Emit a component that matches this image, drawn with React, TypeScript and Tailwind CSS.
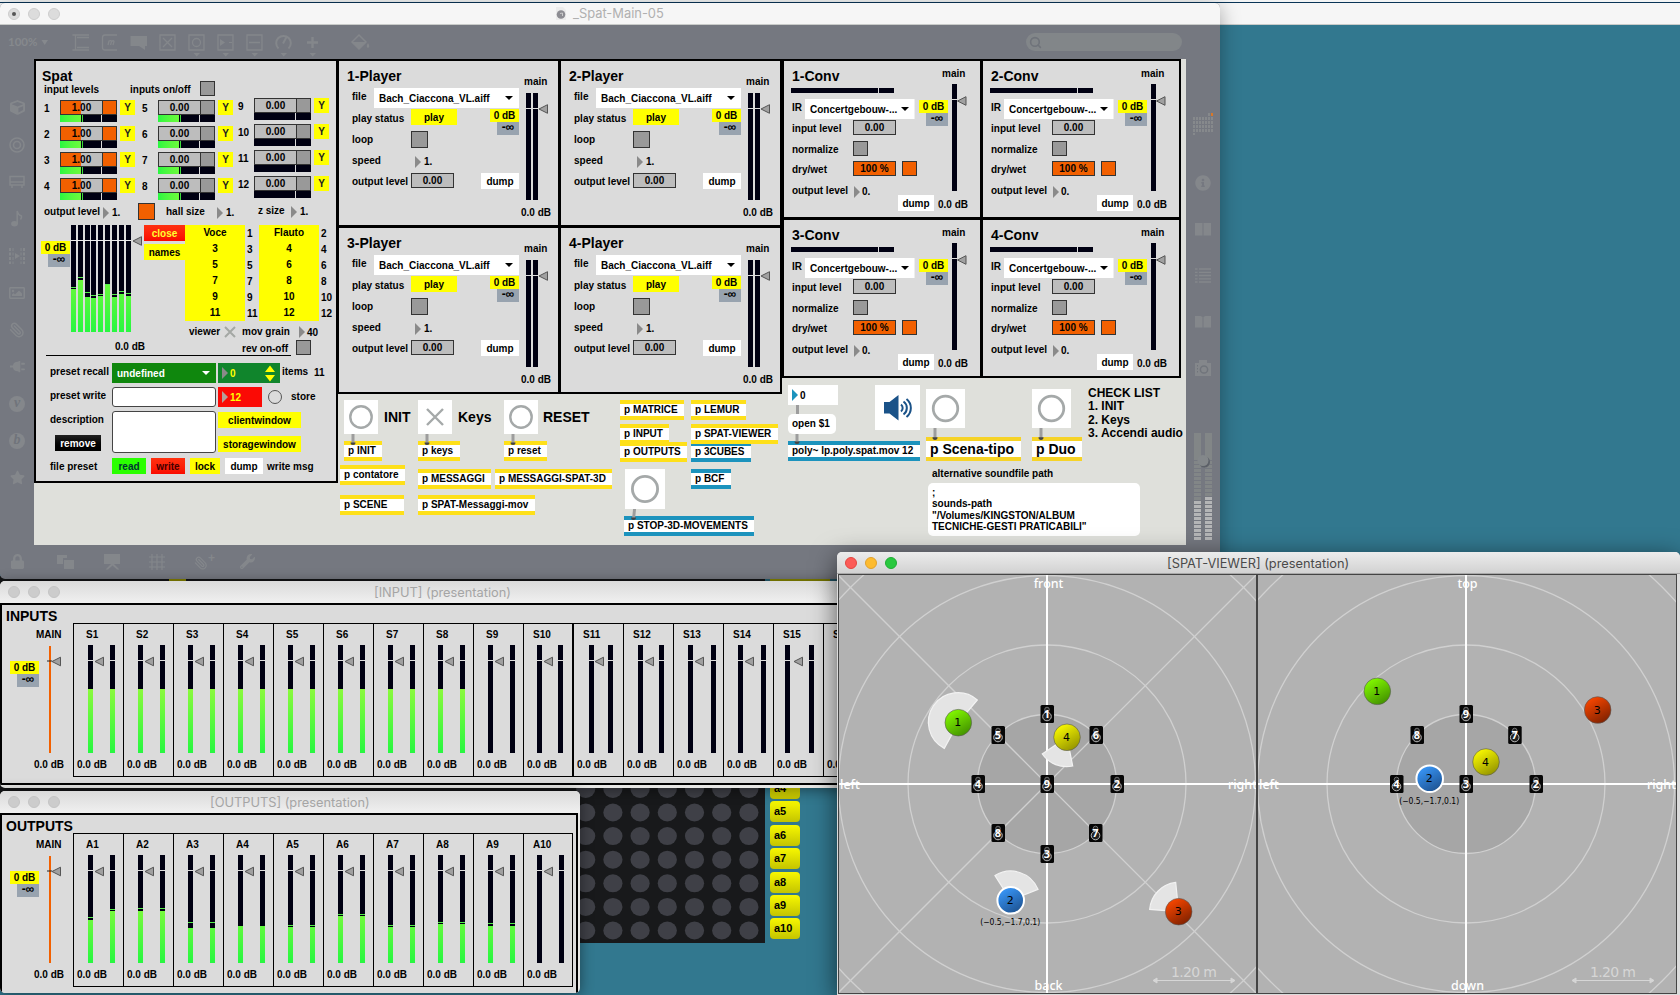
import React from "react";
import { FaCube, FaMusic, FaPlug, FaStar, FaLock, FaWrench, FaInfoCircle, FaRegImage } from "react-icons/fa";
import { Paperclip, Search } from "lucide-react";

type P = { c?: string; children?: React.ReactNode };

const L = ({ c = "", children }: P) => <span className={`block shrink-0 whitespace-nowrap ${c}`}>{children}</span>;

const Btn = ({ c = "", children }: P) => (
  <span className={`block h-4 shrink-0 text-center leading-[17px] whitespace-nowrap ${c}`}>{children}</span>
);

const Box = ({ c = "", children }: P) => (
  <span className={`block h-[15px] shrink-0 border border-[#333] text-center leading-[13px] whitespace-nowrap ${c}`}>{children}</span>
);

const Tri = ({ c = "", fill = "#8a8a8a" }: { c?: string; fill?: string }) => (
  <svg className={`block shrink-0 ${c}`} width="6" height="12" viewBox="0 0 6 12">
    <path d="M0 0L6 6L0 12Z" fill={fill} />
  </svg>
);

const Down = ({ c = "", fill = "#000" }: { c?: string; fill?: string }) => (
  <svg className={`block shrink-0 ${c}`} width="8" height="4" viewBox="0 0 8 4">
    <path d="M0 0H8L4 4Z" fill={fill} />
  </svg>
);

const Gain = ({ c = "" }: P) => (
  <div className={`flex w-[29px] shrink-0 flex-col items-end ${c}`}>
    <span className="h-[13px] w-[29px] bg-[#ffff00] text-center leading-[13px]">0 dB</span>
    <span className="h-[13px] w-[22px] bg-[#98a3af] text-center text-[12px] leading-[11px]">-∞</span>
  </div>
);

const Knob = ({ x, y }: { x: number; y: number }) => (
  <path d={`M${x} ${y}L${x + 8.5} ${y - 4.3}V${y + 4.3}Z`} fill="#a0a0a0" stroke="#555" strokeWidth="1" />
);

const DARK = "#000012";

function PlayerMeter() {
  return (
    <svg className="mt-[6px] ml-[5px] block" width="23" height="107">
      <rect width="5" height="107" fill={DARK} />
      <rect x="7" width="5" height="107" fill={DARK} />
      <rect y="15" width="12" height="1" fill="#ddd" />
      <Knob x={13} y={16} />
    </svg>
  );
}

function Player({ n }: { n: number }) {
  return (
    <section className="flex h-[168px] w-[223px] border-2 border-black bg-[#dbdbdb]">
      <div className="flex w-[182px] shrink-0 flex-col pt-[7px] pl-2">
        <h2 className="h-4 text-[14px] leading-4">{n}-Player</h2>
        <div className="mt-1 ml-[5px] flex h-[21px] items-start">
          <L c="w-[22px] leading-[17px]">file</L>
          <div className="flex h-5 w-[145px] shrink-0 items-center justify-between bg-white pr-[6px] pl-[5px]">
            <L>Bach_Ciaccona_VL.aiff</L>
            <Down />
          </div>
        </div>
        <div className="ml-[5px] flex h-[22px] items-start">
          <L c="w-[59px] leading-[19px]">play status</L>
          <Btn c="w-[46px] bg-[#ffff00]">play</Btn>
          <Gain c="ml-[33px]" />
        </div>
        <div className="ml-[5px] flex h-[22px] items-start">
          <L c="w-[59px] leading-[17px]">loop</L>
          <span className="h-[17px] w-[17px] border border-[#333] bg-[#999]" />
        </div>
        <div className="ml-[5px] flex h-5 items-start">
          <L c="w-[63px] leading-[15px]">speed</L>
          <Tri c="mt-[3px]" />
          <L c="ml-[3px] leading-[17px]">1.</L>
        </div>
        <div className="ml-[5px] flex items-start">
          <L c="w-[59px] leading-[17px]">output level</L>
          <Box c="w-[43px] bg-[#bdbdbd]">0.00</Box>
          <Btn c="ml-[27px] w-[38px] bg-white">dump</Btn>
        </div>
      </div>
      <div className="flex flex-col pt-[16px]">
        <L c="ml-[3px] leading-[10px]">main</L>
        <PlayerMeter />
        <L c="mt-[6px] leading-[13px]">0.0 dB</L>
      </div>
    </section>
  );
}

function Conv({ n }: { n: number }) {
  return (
    <section className="flex h-[160px] w-[200px] border-2 border-black bg-[#dbdbdb]">
      <div className="flex w-[154px] shrink-0 flex-col pt-[7px] pl-2">
        <h2 className="h-4 text-[14px] leading-4">{n}-Conv</h2>
        <div className="mt-1 -ml-px flex h-[5px] gap-px">
          <span className="w-[87px] bg-[#000012]" />
          <span className="w-[15px] bg-[#000012]" />
        </div>
        <div className="mt-[6px] flex h-[21px] items-start">
          <L c="w-[13px] leading-[17px]">IR</L>
          <div className="flex h-5 w-[110px] shrink-0 items-center justify-between border-r border-[#eee] bg-white pr-[5px] pl-[5px]">
            <L>Concertgebouw-...</L>
            <Down />
          </div>
          <Gain c="mt-px ml-1" />
        </div>
        <div className="flex h-[21px] items-start">
          <L c="w-[61px] leading-[18px]">input level</L>
          <Box c="w-[43px] bg-[#bdbdbd]">0.00</Box>
        </div>
        <div className="flex h-5 items-start">
          <L c="w-[61px] leading-[18px]">normalize</L>
          <Box c="w-[15px] bg-[#999]" />
        </div>
        <div className="flex h-[21px] items-start">
          <L c="w-[61px] leading-[18px]">dry/wet</L>
          <Box c="w-[43px] bg-[#f26000]">100 %</Box>
          <Box c="ml-[6px] w-[15px] bg-[#f26000]" />
        </div>
        <div className="flex items-start">
          <L c="w-[62px] leading-[18px]">output level</L>
          <Tri c="mt-1" />
          <L c="ml-[2px] w-9 leading-[19px]">0.</L>
          <Btn c="mt-[13px] w-9 bg-white">dump</Btn>
        </div>
      </div>
      <div className="flex flex-col pt-[7px]">
        <L c="ml-1 leading-[12px]">main</L>
        <svg className="mt-[4px] ml-[14px] block" width="16" height="107">
          <rect width="5" height="107" fill={DARK} />
          <rect y="15" width="6" height="1" fill="#ddd" />
          <Knob x={5.5} y={17} />
        </svg>
        <L c="mt-[8px] leading-[12px]">0.0 dB</L>
      </div>
    </section>
  );
}

function Channels({ nums, kind, c }: { nums: number[]; kind: "on" | "half" | "off"; c: string }) {
  return (
    <div className={`flex flex-col gap-1 ${c}`}>
      {nums.map((n) => (
        <div key={n} className="flex h-[22px] items-start">
          <L c="w-4 leading-[17px]">{n}</L>
          <div className="w-[57px] shrink-0">
            <div className="flex">
              <Box c={`w-[43px] ${kind === "on" ? "bg-linear-to-r from-[#f26000] from-50% to-[#bdbdbd] to-50%" : "bg-[#bdbdbd]"}`}>
                {kind === "on" ? "1.00" : "0.00"}
              </Box>
              <Box c={`-ml-px w-[15px] ${kind === "on" ? "bg-[#f26000]" : "bg-[#999]"}`} />
            </div>
            <div className="flex h-[7px] gap-px">
              <span className="flex w-[41px] bg-[#000012]">
                {kind !== "off" && (
                  <>
                    <span className="mr-px w-[21px] bg-linear-to-r from-[#27f741] to-[#6cfa3c]" />
                    <span className="w-px bg-[#3fdd3c]" />
                  </>
                )}
              </span>
              <span className="w-[15px] bg-[#000012]" />
            </div>
          </div>
          <span className="ml-[3px] h-[15px] w-[15px] bg-[#ffff00] text-center leading-[15px] text-[#222]">Y</span>
        </div>
      ))}
    </div>
  );
}

const spatBars = [
  [0, 64, 62], [7, 55, 52], [14, 72, 67], [20, 73, 70], [27, 71, 69], [34, 59, 59], [41, 72, 69], [48, 69, 66], [55, 71, 68],
];

function List({ items, c }: { items: string[]; c: string }) {
  return (
    <div className={`h-24 shrink-0 ${c}`}>
      {items.map((t) => (
        <span key={t} className="block h-4 leading-[15px]">{t}</span>
      ))}
    </div>
  );
}

function Spat() {
  return (
    <section className="h-[424px] w-[304px] shrink-0 border-2 border-black bg-[#dbdbdb]">
      <div className="flex h-[39px] flex-col pt-[7px] pl-[6px]">
        <h2 className="h-[13px] text-[14px] leading-4">Spat</h2>
        <div className="ml-[2px] flex items-start">
          <L c="w-[86px] leading-[17px]">input levels</L>
          <L c="w-[70px] leading-[17px]">inputs on/off</L>
          <Box c="w-[15px] bg-[#999]" />
        </div>
      </div>
      <div className="flex h-[103px] items-start pl-2">
        <Channels nums={[1, 2, 3, 4]} kind="on" c="w-[98px]" />
        <Channels nums={[5, 6, 7, 8]} kind="half" c="w-24" />
        <Channels nums={[9, 10, 11, 12]} kind="off" c="-mt-[2px]" />
      </div>
      <div className="flex h-[22px] items-start pl-2">
        <L c="w-[59px] leading-[17px]">output level</L>
        <Tri c="mt-1" />
        <L c="ml-[3px] w-[26px] leading-[19px]">1.</L>
        <span className="h-[17px] w-[17px] border border-[#333] bg-[#f26000]" />
        <L c="ml-[11px] w-[51px] leading-[17px]">hall size</L>
        <Tri c="mt-1" />
        <L c="ml-[3px] w-8 leading-[19px]">1.</L>
        <L c="w-[33px] leading-[15px]">z size</L>
        <Tri c="mt-[3px]" />
        <L c="ml-[3px] leading-[17px]">1.</L>
      </div>
      <div className="flex h-[130px]">
        <div className="flex w-[108px] shrink-0 flex-col">
          <div className="flex h-[107px]">
            <Gain c="mt-4 ml-[5px]" />
            <svg className="ml-px block" width="72" height="107">
              <defs>
                <linearGradient id="spatg" x1="0" y1="0" x2="0" y2="107" gradientUnits="userSpaceOnUse">
                  <stop offset="0.4" stopColor="#7dfa3a" />
                  <stop offset="1" stopColor="#27f741" />
                </linearGradient>
              </defs>
              {spatBars.map(([x, t, p]) => (
                <g key={x}>
                  <rect x={x} width="5" height="107" fill={DARK} />
                  <rect x={x} y={t} width="5" height={107 - t} fill="url(#spatg)" />
                  <rect x={x} y={p} width="5" height="1" fill="#55ee4a" />
                </g>
              ))}
              <rect y="15" width="60" height="1" fill="#eee" />
              <Knob x={62} y={16} />
            </svg>
          </div>
          <L c="mt-2 ml-[79px] leading-[13px]">0.0 dB</L>
        </div>
        <div className="flex flex-col">
          <div className="flex h-24">
            <div className="flex w-[41px] shrink-0 flex-col gap-[3px]">
              <Btn c="bg-linear-to-b from-[#ff3010] to-[#fa0800] text-[#ffff30]">close</Btn>
              <Btn c="bg-[#ffff00]">names</Btn>
            </div>
            <List c="w-[60px] bg-[#ffff00] text-center" items={["Voce", "3", "5", "7", "9", "11"]} />
            <List c="ml-[2px] w-[12px] pt-px" items={["1", "3", "5", "7", "9", "11"]} />
            <List c="w-[60px] bg-[#ffff00] text-center" items={["Flauto", "4", "6", "8", "10", "12"]} />
            <List c="ml-[2px] w-[12px] pt-px" items={["2", "4", "6", "8", "10", "12"]} />
          </div>
          <div className="mt-[2px] ml-[45px] flex h-[17px] items-start">
            <L c="w-[35px] leading-[17px]">viewer</L>
            <svg className="mt-[3px] block shrink-0" width="12" height="12">
              <path d="M1 1L11 11M11 1L1 11" stroke="#a4a8a4" strokeWidth="2" />
            </svg>
            <L c="ml-[6px] w-[57px] leading-[17px]">mov grain</L>
            <Tri c="mt-[3px]" />
            <L c="ml-[2px] leading-[19px]">40</L>
          </div>
          <div className="ml-[98px] flex items-start">
            <L c="w-[54px] leading-[17px]">rev on-off</L>
            <Box c="w-[15px] bg-[#999]" />
          </div>
        </div>
      </div>
      <div className="ml-[10px] h-px w-[245px] bg-black" />
      <div className="mt-[7px] flex h-6 items-start pl-[14px]">
        <L c="w-[62px] leading-[18px]">preset recall</L>
        <div className="flex h-5 w-[104px] shrink-0 items-center justify-between bg-[#0f870d] pr-[6px] pl-[5px] text-white">
          <L>undefined</L>
          <Down fill="#fff" />
        </div>
        <div className="ml-[2px] flex h-5 w-[62px] shrink-0 items-center bg-[#10852c] pr-[5px] pl-1 text-[#ffff00]">
          <Tri />
          <L c="ml-[2px] flex-1">0</L>
          <svg className="block" width="10" height="17">
            <path d="M0 7L5 0.5L10 7ZM0 10L5 16.5L10 10Z" fill="#ffff00" />
          </svg>
        </div>
        <L c="ml-[2px] w-8 leading-[18px]">items</L>
        <L c="leading-[19px]">11</L>
      </div>
      <div className="flex h-6 items-start pl-[14px]">
        <L c="w-[62px] leading-[18px]">preset write</L>
        <span className="h-5 w-[104px] shrink-0 rounded-[3px] border-[1.5px] border-[#444] bg-white" />
        <div className="ml-[2px] flex h-5 w-11 shrink-0 items-center bg-[#fb0a05] pl-1 text-[#ffff00]">
          <Tri fill="#b5a09a" />
          <L c="ml-[2px]">12</L>
        </div>
        <span className="mt-[3px] ml-[6px] h-[14px] w-[14px] shrink-0 rounded-full border-[1.5px] border-[#555]" />
        <L c="ml-[9px] leading-[20px]">store</L>
      </div>
      <div className="flex h-[47px] items-start pl-[14px]">
        <div className="w-[62px] shrink-0">
          <L c="leading-[17px]">description</L>
          <Btn c="mt-[7px] ml-[5px] w-[46px] bg-linear-to-b from-[#222] to-black text-white">remove</Btn>
        </div>
        <span className="h-[42px] w-[104px] shrink-0 rounded-[3px] border-[1.5px] border-[#444] bg-white" />
        <div className="mt-px ml-[2px] flex w-[83px] flex-col gap-2">
          <Btn c="bg-[#ffff00]">clientwindow</Btn>
          <Btn c="bg-[#ffff00]">storagewindow</Btn>
        </div>
      </div>
      <div className="flex items-start pl-[14px]">
        <L c="w-[62px] leading-[17px]">file preset</L>
        <Btn c="w-[34px] bg-[#2aff00] text-[#033]">read</Btn>
        <Btn c="ml-[5px] w-[34px] bg-linear-to-b from-[#ff3010] to-[#fa0800] text-[#400]">write</Btn>
        <Btn c="ml-[5px] w-[30px] bg-[#ffff00]">lock</Btn>
        <Btn c="ml-[5px] w-[38px] bg-white">dump</Btn>
        <L c="ml-1 leading-[17px]">write msg</L>
      </div>
    </section>
  );
}

const objects: [string, string][] = [
  ["p 3CUBES", "left-[657px] top-[383px] w-[60px] border-[#1c93bd]"],
  ["p MATRICE", "left-[586px] top-[341px] w-[64px] border-[#fee019]"],
  ["p LEMUR", "left-[657px] top-[341px] w-[55px] border-[#fee019]"],
  ["p INPUT", "left-[586px] top-[365px] w-[49px] border-[#fee019]"],
  ["p SPAT-VIEWER", "left-[657px] top-[365px] w-[87px] border-[#fee019]"],
  ["p OUTPUTS", "left-[586px] top-[383px] w-[67px] border-[#fee019]"],
  ["p BCF", "left-[657px] top-[410px] w-[40px] border-[#1c93bd]"],
  ["p INIT", "left-[310px] top-[382px] w-[38px] border-[#fee019]"],
  ["p keys", "left-[384px] top-[382px] w-[42px] border-[#fee019]"],
  ["p reset", "left-[470px] top-[382px] w-[43px] border-[#fee019]"],
  ["p contatore", "left-[306px] top-[406px] w-[65px] border-[#fee019]"],
  ["p SCENE", "left-[306px] top-[436px] w-[64px] border-[#fee019]"],
  ["p MESSAGGI", "left-[384px] top-[410px] w-[73px] border-[#fee019]"],
  ["p MESSAGGI-SPAT-3D", "left-[461px] top-[410px] w-[117px] border-[#fee019]"],
  ["p SPAT-Messaggi-mov", "left-[384px] top-[436px] w-[117px] border-[#fee019]"],
  ["p STOP-3D-MOVEMENTS", "left-[590px] top-[457px] w-[130px] border-[#1c93bd]"],
  ["poly~ lp.poly.spat.mov 12", "left-[754px] top-[382px] w-[132px] border-[#1c93bd]"],
];

const Bang = ({ c }: { c: string }) => (
  <div className={`absolute bg-white ${c}`}>
    <svg className="block h-full w-full" viewBox="0 0 34 34">
      <circle cx="17" cy="17" r="10.7" fill="none" stroke="#a5a9a9" strokeWidth="2.4" />
    </svg>
  </div>
);

const Cord = ({ c }: { c: string }) => (
  <svg className={`absolute ${c}`} width="6" height="11" viewBox="0 0 6 11" preserveAspectRatio="none">
    <rect x="1.5" width="3" height="10" fill="#9d9d9d" />
    <path d="M0.5 8.5H5.5A2.5 2.5 0 0 1 0.5 8.5Z" fill="#444" />
  </svg>
);

function Patch() {
  return (
    <>
      {objects.map(([t, c]) => (
        <div key={t} className={`absolute h-5 border-y-4 bg-white pl-1 leading-[12px] whitespace-nowrap ${c}`}>{t}</div>
      ))}
      <div className="absolute top-[378px] left-[892px] h-6 w-[95px] border-y-4 border-[#f6d327] bg-white pl-1 text-[14px] leading-[16px] whitespace-nowrap">p Scena-tipo</div>
      <div className="absolute top-[378px] left-[998px] h-6 w-[50px] border-y-4 border-[#f6d327] bg-white pl-1 text-[14px] leading-[16px] whitespace-nowrap">p Duo</div>
      <Bang c="left-[310px] top-[341px] h-[34px] w-[34px]" />
      <div className="absolute top-[341px] left-[384px] h-[34px] w-[34px] bg-white">
        <svg className="block" width="34" height="34">
          <path d="M9 9L25 25M25 9L9 25" stroke="#a5a9a9" strokeWidth="2.4" />
        </svg>
      </div>
      <Bang c="left-[470px] top-[341px] h-[34px] w-[34px]" />
      <Bang c="left-[591px] top-[410px] h-[40px] w-[40px]" />
      <Bang c="left-[892px] top-[330px] h-[39px] w-[39px]" />
      <Bang c="left-[998px] top-[330px] h-[39px] w-[39px]" />
      <h3 className="absolute top-[350px] left-[350px] text-[14px] leading-4">INIT</h3>
      <h3 className="absolute top-[350px] left-[424px] text-[14px] leading-4">Keys</h3>
      <h3 className="absolute top-[350px] left-[509px] text-[14px] leading-4">RESET</h3>
      <Cord c="left-[316px] top-[375px]" />
      <Cord c="left-[390px] top-[375px]" />
      <Cord c="left-[476px] top-[375px]" />
      <Cord c="left-[597px] top-[450px] skew-x-[-6deg]" />
      <Cord c="left-[898px] top-[369px] h-[12px]" />
      <Cord c="left-[1004px] top-[369px] h-[12px]" />
      <Cord c="left-[760px] top-[374px] h-[11px]" />
      <div className="absolute top-[346px] left-[762px] h-[9px] w-[3px] bg-[#9d9d9d]" />
      <div className="absolute top-[326px] left-[754px] flex h-5 w-[50px] items-center gap-[2px] bg-white pl-1">
        <Tri fill="#1c93bd" />0
      </div>
      <div className="absolute top-[355px] left-[754px] h-5 w-12 rounded-[5px] bg-white pl-1 leading-5">open $1</div>
      <div className="absolute top-[326px] left-[841px] h-[45px] w-[45px] bg-white">
        <svg className="block" width="45" height="45" fill="none" stroke="#1a5288">
          <path d="M9 17H14.5L23.5 10V35.5L14.5 28.5H9Z" fill="#1a5288" stroke="none" />
          <path d="M26 19.500A4.500 4.500 0 0 1 26 26.500M28.500 16.500A8 8 0 0 1 28.500 29.500M31.500 14A11.500 11.500 0 0 1 31.500 32" strokeWidth="2" />
        </svg>
      </div>
      <div className="absolute top-[328px] left-[1054px] text-[12px] leading-[13.3px] whitespace-nowrap">
        <p>CHECK LIST</p>
        <p>1. INIT</p>
        <p>2. Keys</p>
        <p>3. Accendi audio</p>
      </div>
      <L c="absolute left-[898px] top-[407px] leading-[15px]">alternative soundfile path</L>
      <div className="absolute top-[424px] left-[894px] h-[53px] w-[212px] rounded-[5px] bg-white pt-[4px] pl-1 leading-[11.3px] whitespace-nowrap">
        <p>;</p>
        <p>sounds-path</p>
        <p>"/Volumes/KINGSTON/ALBUM</p>
        <p>TECNICHE-GESTI PRATICABILI"</p>
      </div>
    </>
  );
}

function Lights({ c, dot }: { c: string[]; dot?: boolean }) {
  return (
    <div className="flex w-[52px] shrink-0 gap-2">
      {c.map((k, i) => (
        <span key={i} className={`flex h-3 w-3 items-center justify-center rounded-full border ${k}`}>
          {dot && i === 0 && <span className="h-1 w-1 rounded-full bg-[#555]" />}
        </span>
      ))}
    </div>
  );
}

const Letter = ({ t }: { t: string }) => (
  <span className="flex h-4 w-4 items-center justify-center rounded-full bg-[#84878b] pb-[2px] font-['Liberation_Serif',serif] text-[14px] leading-none text-[#70747b] italic">{t}</span>
);

function Toolbar() {
  return (
    <div className="flex h-[34px] items-start text-[#86898d]">
      <span className="mt-[9px] ml-2 w-[32px] font-[Lato] text-[11.5px] leading-4">100%</span>
      <svg className="mt-[15px] ml-px" width="8" height="6"><path d="M0.500 0H7L3.700 5Z" fill="#86898d" /></svg>
      <svg className="mt-[8px] ml-[23px] block" width="300" height="26" fill="none" stroke="#84878b" strokeWidth="1.3">
        <path d="M0.500 2H17M0.500 17H17M3.500 2V17M5 4.500H17M5 14.500H17" />
        <path d="M45 2H33Q30.500 2 30.500 4.500V14.500Q30.500 17 33 17H45" />
        <path d="M36 12L37 8Q39 7 39.500 8.500L38.500 12M39.500 8.500Q41.500 7 42 8.500L41 12" />
        <path d="M58.500 3H75V13H73V17L67 13H58.500Z" fill="#84878b" stroke="none" />
        <path d="M88 2H103V17H88ZM91 5L100 14M100 5L91 14" />
        <path d="M117 2H132V17H117Z" /><circle cx="124.500" cy="9.500" r="4" />
        <path d="M146 2H161V17H146Z" /><path d="M148 6L153 9.500L148 13ZM157 9H160V10H157Z" fill="#84878b" stroke="none" />
        <path d="M175 2H190V17H175ZM177 9.500H188" />
        <path d="M206.500 15.500A7.300 7.300 0 1 1 216.500 15.500M211 10.500L214.500 4" strokeWidth="2" />
        <path d="M235 9.500H246M240.500 4V15" strokeWidth="2.400" />
        <path d="M280 9L287 2L294 9L287 16Z" strokeWidth="1.500" /><path d="M280 9H294L287 16ZM296 10Q298.500 14 296 15Q293.500 14 296 10Z" fill="#84878b" stroke="none" />
        <path d="M121.500 20H128L124.700 23.500ZM150.500 20H157L153.700 23.500ZM179.500 20H186L182.700 23.500ZM208.500 20H215L211.700 23.500ZM237.500 20H244L240.700 23.500Z" fill="#84878b" stroke="none" />
      </svg>
      <div className="mt-2 mr-[38px] ml-auto flex h-[18px] w-[156px] items-center rounded-full bg-[#828689] pl-[3px]">
        <Search size={13} color="#6f737a" strokeWidth={3} />
      </div>
    </div>
  );
}

function LeftBar() {
  const items: React.ReactNode[] = [
    <FaCube size={15} />,
    <svg width="16" height="16" fill="none" stroke="#84878b" strokeWidth="1.6"><circle cx="8" cy="8" r="7" /><circle cx="8" cy="8" r="3.500" /></svg>,
    <svg width="16" height="14" fill="none" stroke="#84878b" strokeWidth="1.5"><path d="M1 1.500H15V10H1ZM3 10V13M13 10V13M1 7H15" /></svg>,
    <svg width="12" height="17" viewBox="0 0 12 17"><ellipse cx="3.500" cy="13.800" rx="3.400" ry="2.700" fill="#84878b" /><path d="M6.200 14V1Q7 5 10.500 6Q10.800 8 9.500 9.500" fill="none" stroke="#84878b" strokeWidth="1.500" /></svg>,
    <svg width="16" height="16" fill="none" stroke="#84878b" strokeWidth="2"><path d="M1 0V16M15 0V16" strokeDasharray="3 1.500" /><path d="M4 0V16M12 0V16" strokeWidth="1" strokeDasharray="3 1.500" /><path d="M6 5L11 8L6 11Z" fill="#84878b" stroke="none" /></svg>,
    <FaRegImage size={16} />,
    <Paperclip size={16} strokeWidth={2.200} className="-scale-x-100" />,
    <FaPlug size={15} className="rotate-90" />,
    <Letter t="v" />,
    <Letter t="b" />,
    <FaStar size={15} />,
  ];
  return (
    <div className="flex w-[34px] shrink-0 flex-col items-center pt-[30px] text-[#84878b]">
      {items.map((n, i) => (
        <div key={i} className="flex h-[37px] items-center">{n}</div>
      ))}
    </div>
  );
}

const ListIcon = () => (
  <svg width="16" height="15" stroke="#84878b" strokeWidth="1.3"><path d="M0 1H2.500M4 1H16M0 4.300H2.500M4 4.300H16M0 7.500H2.500M4 7.500H16M0 10.800H2.500M4 10.800H16M0 14H2.500M4 14H16" /></svg>
);

function RightBar() {
  const rows = Array.from({ length: 27 }, (_, i) => i);
  return (
    <div className="flex w-[34px] shrink-0 flex-col items-center text-[#84878b]">
      <svg className="mt-[54px] block" width="21" height="22">
        {[0, 1, 2, 3].flatMap((r) => [0, 1, 2, 3, 4, 5, 6].map((k) => <rect key={`${r}${k}`} x={k * 3} y={4 + r * 4} width="2" height="3" fill="#86898c" />))}
        <rect x="15" width="2" height="3" fill="#86898c" /><rect x="18" width="2" height="3" fill="#d87828" /><rect y="20" width="2" height="2" fill="#86898c" />
      </svg>
      <FaInfoCircle className="mt-[40px]" size={16} />
      <svg className="mt-[32px]" width="16" height="13"><path d="M0 0H7.500V12.500H0ZM8.500 0H16V12.500H8.500Z" fill="#84878b" /></svg>
      <div className="mt-[32px]"><ListIcon /></div>
      <svg className="mt-[33px]" width="16" height="12"><path d="M0 0Q5 -1 7.500 1V11.500H0ZM8.500 1Q11 -1 16 0V11.500H8.500Z" fill="#84878b" /></svg>
      <svg className="mt-[32px]" width="16" height="17"><path d="M0 3H4V0H12V3H16V16H0Z" fill="#84878b" /><circle cx="9" cy="9.500" r="3.600" fill="none" stroke="#70747b" strokeWidth="1.500" /><path d="M2.500 5V14" stroke="#70747b" strokeDasharray="1.500 1.500" /></svg>
      <svg className="mt-[56px] block" width="20" height="109">
        {rows.map((i) => (
          <g key={i}>
            <rect x="1" y={i * 4} width="7" height={i < 6 ? 4 : 3} fill={i < 17 ? "#828687" : "#b4b5b6"} />
            <rect x="12" y={i * 4} width="7" height={i < 6 ? 4 : 3} fill={i < 16 ? "#828687" : "#b4b5b6"} />
          </g>
        ))}
        <circle cx="11.500" cy="29" r="5.500" fill="#5c6068" />
        <circle cx="10" cy="27.500" r="5.500" fill="#83878a" />
      </svg>
    </div>
  );
}

function BottomBar() {
  return (
    <div className="flex h-[35px] items-start gap-[30px] pt-[9px] pl-[10px] text-[#84878b]">
      <FaLock size={15} />
      <svg className="ml-[2px]" width="17" height="16"><path d="M0 1H10V4H6V10H0Z" fill="#84878b" /><path d="M7 6H17V15H7Z" fill="#84878b" /></svg>
      <svg width="17" height="16"><path d="M0 0H16V10H0ZM7 10L1.500 15.500H4L8.500 11.500L13 15.500H15.500L10 10Z" fill="#84878b" /></svg>
      <svg className="-ml-[2px]" width="16" height="16" stroke="#84878b" strokeWidth="1.200"><path d="M0 3H16M0 8H16M0 13H16M3 0V16M8 0V16M13 0V16" /></svg>
      <span className="-ml-px flex w-4 text-[12px] leading-[8px]"><Paperclip size={14} className="mt-[2px] shrink-0 -scale-x-100" />+</span>
      <FaWrench size={15} />
    </div>
  );
}

const GREY = "border-[#cdcdcd] bg-[#dcdcdc]";
const GREY2 = "border-[#c4c4c4] bg-[#cccccc]";

function MainWindow() {
  return (
    <div className="absolute top-[3px] left-0 flex h-[576px] w-[1220px] flex-col overflow-hidden rounded-[5px] bg-[#757880] shadow-[0_4px_20px_rgba(0,0,0,0.35)]">
      <div className="flex h-[22px] shrink-0 items-center border-b border-[#c9cbc9] bg-[#f6f6f6] pl-2">
        <Lights c={[GREY, GREY, GREY]} dot />
        <div className="ml-[496px] flex items-center gap-[7px] font-[Inter] text-[12.9px] font-normal text-[#b0b0b0]">
          <svg width="10" height="13"><path d="M0 0H7L10 3V13H0Z" fill="#ececec" /><circle cx="5" cy="7.500" r="4.300" fill="#8d8d93" /><path d="M4 6.500L6.500 6V9" stroke="#ccc" fill="none" /></svg>
          <span className="pt-px">_Spat-Main-05</span>
        </div>
      </div>
      <Toolbar />
      <div className="flex h-[486px] shrink-0">
        <LeftBar />
        <div className="relative flex w-[1152px] shrink-0 items-start overflow-hidden bg-[#dfe0db]">
          <Patch />
          <Spat />
          <div className="-ml-px grid grid-cols-[222px_223px] grid-rows-[167px_168px]">
            {[1, 2, 3, 4].map((n) => <Player key={n} n={n} />)}
          </div>
          <div className="grid grid-cols-[199px_200px] grid-rows-[159px_160px]">
            {[1, 2, 3, 4].map((n) => <Conv key={n} n={n} />)}
          </div>
        </div>
        <RightBar />
      </div>
      <BottomBar />
    </div>
  );
}

type Strip = { name: string; a?: number; b?: number; pa?: number; pb?: number; o?: number; g?: number; k?: number; thick?: boolean };

function Channel({ s, last }: { s: Strip; last?: boolean }) {
  const o = 3 + (s.o ?? 0);
  const bar = (x: number, top?: number, peak?: number) => (
    <>
      <rect x={x} width="5" height="108" fill={DARK} />
      <rect x={x} y="15" width="5" height="1" fill="#ddd" />
      {top !== undefined && <rect x={x} y={top} width="5" height={108 - top} fill="url(#vu)" />}
      {peak !== undefined && <rect x={x} y={peak} width="5" height="1" fill="#55ee4a" />}
    </>
  );
  return (
    <div className={`flex shrink-0 flex-col border-black ${s.thick ? "-ml-px w-[51px] border-l-2" : "w-[50px] border-l"} ${last ? "border-r" : ""}`}>
      <L c={`mt-[4px] leading-[13px] ${s.name.length > 2 ? "ml-[9px]" : "ml-[12px]"}`}>{s.name}</L>
      <svg className="mt-[4px] ml-[11px] block" width="35" height="108">
        <defs>
          <linearGradient id="vu" x1="0" y1="0" x2="0" y2="108" gradientUnits="userSpaceOnUse">
            <stop offset="0.4" stopColor="#8cf93c" />
            <stop offset="1" stopColor="#27f741" />
          </linearGradient>
        </defs>
        {bar(o, s.a, s.pa)}
        {bar(o + (s.g ?? 22), s.b, s.pb)}
        <Knob x={o + (s.k ?? 7)} y={16.500} />
      </svg>
      <L c="mt-[5px] ml-[3px] leading-[13px]">0.0 dB</L>
    </div>
  );
}

function MixWindow({ title, head, strips, c, tc, endBorder }: { title: string; head: string; strips: Strip[]; c: string; tc: string; endBorder: boolean }) {
  return (
    <div className={`absolute left-0 flex flex-col overflow-hidden rounded-[5px] bg-[#e6e6e4] shadow-[0_2px_14px_rgba(0,0,0,0.45)] ${c}`}>
      <div className="flex h-[22px] shrink-0 items-center bg-linear-to-b from-[#dadada] to-[#f0f0f0] pl-2">
        <Lights c={[GREY2, GREY2, GREY2]} />
        <span className={`pt-[2px] font-[Inter] text-[12.8px] font-normal whitespace-nowrap text-[#a5a5a5] ${tc}`}>{title}</span>
      </div>
      <div className={`flex h-[182px] shrink-0 border-2 border-black bg-[#dbdbdb] ${endBorder ? "mr-[2px]" : ""}`}>
        <div className="flex w-[71px] shrink-0 flex-col">
          <h2 className="mt-[3px] ml-1 h-4 text-[14px] leading-4">{head}</h2>
          <L c="mt-[4px] ml-[34px] leading-[13px]">MAIN</L>
          <div className="mt-1 flex h-[108px]">
            <Gain c="mt-4 ml-2" />
            <svg className="ml-[7px] block" width="18" height="108">
              <rect x="3" y="1" width="2" height="107" fill="#f26000" />
              <rect x="1" y="15.500" width="5" height="1" fill="#222" />
              <Knob x={6} y={16.500} />
            </svg>
          </div>
          <L c="mt-[5px] ml-8 leading-[13px]">0.0 dB</L>
        </div>
        <div className="mt-[18px] flex h-[154px] border-y border-black">
          {strips.map((s, i) => <Channel key={s.name} s={s} last={endBorder && i === strips.length - 1} />)}
        </div>
      </div>
    </div>
  );
}

const inputs: Strip[] = [
  ...Array.from({ length: 8 }, (_, i) => ({ name: `S${i + 1}`, a: 44, b: 44 })),
  { name: "S9" },
  { name: "S10", o: -1, g: 21 },
  { name: "S11", o: 1, g: 19, k: 6, thick: true },
  { name: "S12", g: 21 },
  { name: "S13", g: 23 },
  { name: "S14", g: 23 },
  { name: "S15", o: -3, g: 24, k: 9 },
  { name: "S16" },
];
const outputs: Strip[] = [
  { name: "A1", a: 65, b: 56, pa: 62, pb: 54 },
  { name: "A2", a: 56, b: 56, pa: 53, pb: 53 },
  { name: "A3", a: 73, b: 73, pa: 67, pb: 67 },
  { name: "A4", a: 71, b: 71 },
  { name: "A5", a: 72, b: 72, pa: 70, pb: 70 },
  { name: "A6", a: 61, b: 61, pa: 59, pb: 59 },
  { name: "A7", a: 72, b: 72, pa: 70, pb: 70 },
  { name: "A8", a: 69, b: 69, pa: 67, pb: 67 },
  { name: "A9", a: 71, b: 71, pa: 68, pb: 68 },
  { name: "A10", o: -1 },
];

function Matrix() {
  return (
    <div className="absolute top-[576px] left-0 flex h-[367px] gap-[5px]">
      <svg className="block" width="765" height="367">
        <rect width="765" height="367" fill="#18191b" />
        {Array.from({ length: 8 }, (_, r) =>
          Array.from({ length: 7 }, (_, k) => <ellipse key={`${r}-${k}`} cx={585.700 + k * 27.200} cy={354.500 - r * 23.600} rx="9.600" ry="9" fill="#3f4047" />)
        )}
        <rect x="169" y="0" width="17" height="5" fill="#a8a400" />
      </svg>
      <div className="flex w-[60px] flex-col">
        <span className="h-[5px] bg-[#a8a800]" />
        <div className="mt-[197px] flex flex-col gap-[2.400px]">
          {["a4", "a5", "a6", "a7", "a8", "a9", "a10"].map((t) => (
            <span key={t} className="h-[21px] w-[30px] rounded-[4px] bg-linear-to-b from-[#f8f800] to-[#c4c400] pl-1 text-[11px] leading-[21px]">{t}</span>
          ))}
        </div>
      </div>
    </div>
  );
}

type Src = { n: number; x: number; y: number; g: string; w?: string };

function Pane({ labels, speakers, sources, diag, wide }: { labels: string[]; speakers: number[][]; sources: Src[]; diag: boolean; wide: number }) {
  return (
    <svg
      className="block shrink-0 border border-[#444]"
      width={wide}
      height="420"
      viewBox={`-208 -209 ${wide - 2} 418`}
      fontFamily="'Noto Sans', 'DejaVu Sans', sans-serif"
      fontWeight="400"
    >
      <defs>
        {[["g", "#86ff00", "#3f8c00"], ["y", "#ffff00", "#8f8f00"], ["b", "#3a9bff", "#1c4f8c"], ["r", "#ff4800", "#7a2000"]].map(([id, a, b]) => (
          <linearGradient key={id} id={`s-${id}`} x1="0.200" y1="0" x2="0.800" y2="1"><stop offset="0" stopColor={a} /><stop offset="1" stopColor={b} /></linearGradient>
        ))}
      </defs>
      <rect x="-210" y="-211" width="421" height="421" fill="#b2b2b2" />
      <g fill="none" stroke="#d0d0d0" strokeWidth="1.300">
        <circle r="69.500" fill="#a6a6a6" />
        <circle r="139" /><circle r="208.500" /><circle r="278" />
        {diag && <path d="M-210 -210L210 210M210 -210L-210 210" />}
      </g>
      <path d="M-210 0H211M0 -210V210" stroke="#fff" strokeWidth="2" />
      <g fill="#fff" fontSize="12.500" fontWeight="500" textAnchor="middle">
        <text x="1.500" y="-196">{labels[0]}</text>
        <text x="1.500" y="206">{labels[1]}</text>
        <text x="-207" y="5" textAnchor="start">left</text>
        <text x="210" y="5" textAnchor="end">right</text>
      </g>
      <g fill="#d6d6d6" stroke="#d6d6d6">
        <path d="M107 196.500H187M110 194L106 196.500L110 199ZM184 194L188 196.500L184 199Z" />
        <text x="147" y="193" fontSize="14" stroke="none" textAnchor="middle" fontFamily="'DejaVu Sans'" textLength="46">1.20 m</text>
      </g>
      {speakers.map(([n, x, y]) => (
        <g key={n} transform={`translate(${x} ${y})`}>
          <rect x="-6.500" y="-9" width="13.500" height="18" rx="1.500" fill="#060606" />
          <circle cx="0" cy="-4.500" r="2.300" fill="#222" stroke="#888" strokeWidth="0.800" />
          <circle cx="0" cy="2.500" r="4.300" fill="#222" stroke="#bbb" strokeWidth="1" />
          <text y="4" fontSize="11" fontWeight="700" fill="#fff" textAnchor="middle">{n}</text>
        </g>
      ))}
      {sources.map((s) => (
        <g key={s.n} transform={`translate(${s.x} ${s.y})`}>
          {s.w && <path d={s.w} fill="#e4e4e4" stroke="#f2f2f2" strokeWidth="1.200" />}
          <circle r="13.300" fill={`url(#s-${s.g})`} stroke={s.n === 2 ? "#fff" : "#555"} strokeWidth={s.n === 2 ? 2 : 0.600} />
          <text x="-0.500" y="3.500" fontSize="11" textAnchor="middle" fontFamily="'DejaVu Sans'">{s.n}</text>
          {s.n === 2 && <text x="-0.500" y="25" fontSize="8.500" textAnchor="middle" fontFamily="'DejaVu Sans'" textLength="60" lengthAdjust="spacingAndGlyphs">(−0.5,−1.7,0.1)</text>}
        </g>
      ))}
    </svg>
  );
}

function Viewer() {
  return (
    <div className="absolute top-[552px] left-[837px] flex h-[443px] w-[843px] flex-col overflow-hidden rounded-t-[5px] bg-[#dcdcdc] shadow-[0_6px_26px_rgba(0,0,0,0.6)]">
      <div className="flex h-[22px] shrink-0 items-center border-b border-[#a8a8a8] bg-linear-to-b from-[#ececec] to-[#d2d2d2] pl-2">
        <Lights c={["border-[#e2463f] bg-[#fc5b57]", "border-[#e0a02c] bg-[#fdbb2f]", "border-[#1fac33] bg-[#29c83f]"]} />
        <span className="ml-[270px] pt-[2px] font-[Inter] text-[12.8px] font-normal whitespace-nowrap text-[#4a4a4a]">[SPAT-VIEWER] (presentation)</span>
      </div>
      <div className="flex pl-px">
        <Pane
          wide={419}
          labels={["front", "back"]}
          diag
          speakers={[[1, 0, -70], [2, 70, 0], [3, 0, 70], [4, -69, 0], [5, -49, -49], [6, 49, -49], [7, 48.5, 49], [8, -49, 49], [9, 0, 0]]}
          sources={[
            { n: 1, x: -88.700, y: -61.300, g: "g", w: "M0 0L19 -22.700A29.500 29.500 0 1 0 -14 25.700Z" },
            { n: 4, x: 20, y: -46.700, g: "y", w: "M0 0L-24.700 16.700A29.500 29.500 0 0 0 5.700 28.700Z" },
            { n: 2, x: -36.300, y: 116.300, g: "b", w: "M0 0L-15.700 -24.700A29.500 29.500 0 0 1 27.300 -11Z" },
            { n: 3, x: 131.700, y: 127.700, g: "r", w: "M0 0L-29 -2.300A29.500 29.500 0 0 1 -3 -29.300Z" },
          ]}
        />
        <Pane
          wide={420}
          labels={["top", "down"]}
          diag={false}
          speakers={[[9, 0, -70], [8, -49, -49], [7, 48.7, -49], [4, -69.5, 0], [3, 0, 0], [2, 70, 0]]}
          sources={[
            { n: 1, x: -88.700, y: -92.700, g: "g" },
            { n: 3, x: 131.700, y: -74, g: "r" },
            { n: 4, x: 20, y: -22, g: "y" },
            { n: 2, x: -36.300, y: -5.300, g: "b" },
          ]}
        />
      </div>
    </div>
  );
}

export default function App() {
  return (
    <main className="relative h-[995px] w-[1680px] overflow-hidden bg-[#32788f] font-['Liberation_Sans',Arial,sans-serif] text-[10px] font-bold text-black">
      <div className="h-[2px] bg-[#f2f4f5]" />
      <div className="h-px bg-[#0a3557]" />
      <div className="h-[22px] border-b border-[#c9cbc9] bg-[#f6f6f6]" />
      <Matrix />
      <MainWindow />
      <MixWindow title="[INPUT] (presentation)" head="INPUTS" strips={inputs} c="top-[581px] h-[207px] w-[860px]" tc="ml-[314px]" endBorder={false} />
      <MixWindow title="[OUTPUTS] (presentation)" head="OUTPUTS" strips={outputs} c="top-[791px] h-[202px] w-[580px]" tc="ml-[150px]" endBorder />
      <Viewer />
    </main>
  );
}
